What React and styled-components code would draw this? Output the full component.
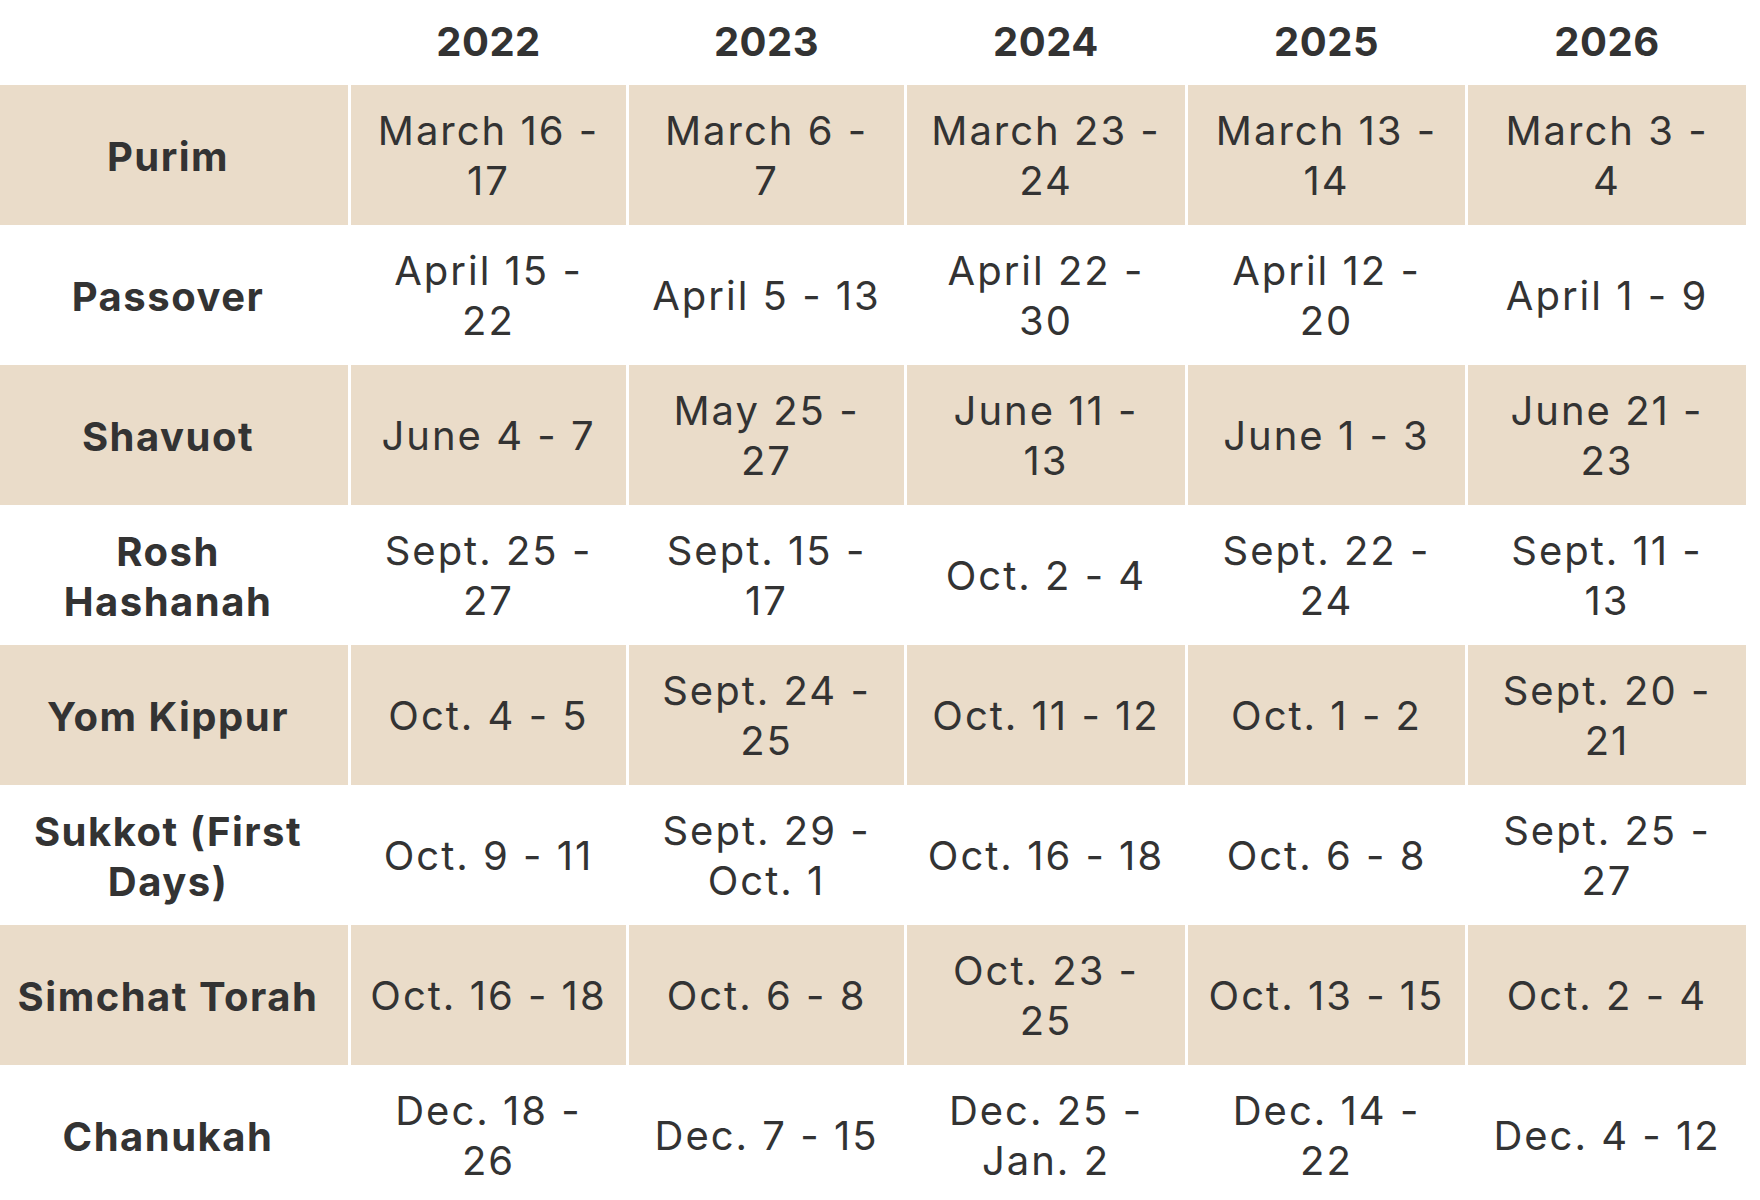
import React from 'react';
import styled, { createGlobalStyle } from 'styled-components';

const GlobalStyle = createGlobalStyle`
  body {
    margin: 0;
    background: #ffffff;
    font-family: Inter, "Noto Sans", sans-serif;
    color: #333333;
  }
`;

const YEARS = ['2022', '2023', '2024', '2025', '2026'];

// '\n' marks where the original cell text wraps
const HOLIDAYS = [
  { name: 'Purim', dates: ['March 16 -\n17', 'March 6 -\n7', 'March 23 -\n24', 'March 13 -\n14', 'March 3 -\n4'] },
  { name: 'Passover', dates: ['April 15 -\n22', 'April 5 - 13', 'April 22 -\n30', 'April 12 -\n20', 'April 1 - 9'] },
  { name: 'Shavuot', dates: ['June 4 - 7', 'May 25 -\n27', 'June 11 -\n13', 'June 1 - 3', 'June 21 -\n23'] },
  { name: 'Rosh\nHashanah', dates: ['Sept. 25 -\n27', 'Sept. 15 -\n17', 'Oct. 2 - 4', 'Sept. 22 -\n24', 'Sept. 11 -\n13'] },
  { name: 'Yom Kippur', dates: ['Oct. 4 - 5', 'Sept. 24 -\n25', 'Oct. 11 - 12', 'Oct. 1 - 2', 'Sept. 20 -\n21'] },
  { name: 'Sukkot (First\nDays)', dates: ['Oct. 9 - 11', 'Sept. 29 -\nOct. 1', 'Oct. 16 - 18', 'Oct. 6 - 8', 'Sept. 25 -\n27'] },
  { name: 'Simchat Torah', dates: ['Oct. 16 - 18', 'Oct. 6 - 8', 'Oct. 23 -\n25', 'Oct. 13 - 15', 'Oct. 2 - 4'] },
  { name: 'Chanukah', dates: ['Dec. 18 -\n26', 'Dec. 7 - 15', 'Dec. 25 -\nJan. 2', 'Dec. 14 -\n22', 'Dec. 4 - 12'] },
];

const Table = styled.div`
  display: grid;
  grid-template-columns: 348px 275px 275px 278px 277px 278px;
  grid-template-rows: 85px;
  grid-auto-rows: 140px;
  column-gap: 3px;
  width: 1746px;
`;

const YearCell = styled.div`
  display: flex;
  align-items: center;
  justify-content: center;
  padding-bottom: 2px;
  font-size: 40px;
  font-weight: 700;
  letter-spacing: 0.5px;
`;

const Cell = styled.div`
  display: flex;
  align-items: center;
  justify-content: center;
  text-align: center;
  white-space: pre-line;
  font-size: 40px;
  line-height: 50px;
  background: ${(p) => (p.$shaded ? '#eadcc9' : 'transparent')};
`;

const NameCell = styled(Cell)`
  padding: 4px 22px 0 10px;
  font-weight: 700;
  letter-spacing: 1.5px;
`;

const DateCell = styled(Cell)`
  padding: 2px 10px 0;
  font-weight: 400;
  letter-spacing: 2px;
`;

const App = () => (
  <>
    <GlobalStyle />
    <Table>
      <YearCell />
      {YEARS.map((year) => (
        <YearCell key={year}>{year}</YearCell>
      ))}
      {HOLIDAYS.map((holiday, rowIndex) => {
        const shaded = rowIndex % 2 === 0;
        return (
          <React.Fragment key={holiday.name}>
            <NameCell $shaded={shaded}>{holiday.name}</NameCell>
            {holiday.dates.map((date, i) => (
              <DateCell $shaded={shaded} key={i}>{date}</DateCell>
            ))}
          </React.Fragment>
        );
      })}
    </Table>
  </>
);

export default App;
